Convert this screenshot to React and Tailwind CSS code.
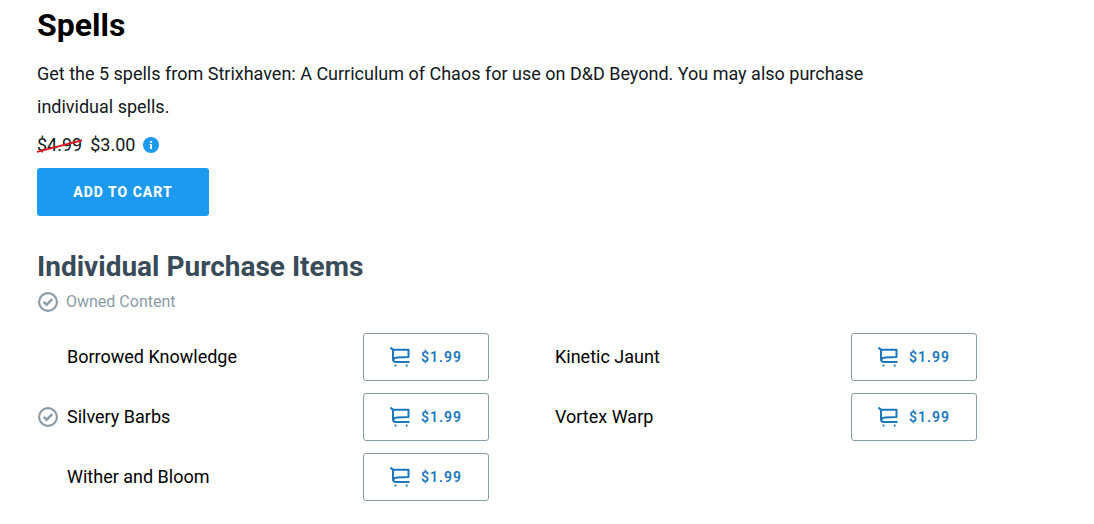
import { useState } from 'react'

const items = [
  { name: 'Borrowed Knowledge', price: '$1.99' },
  { name: 'Kinetic Jaunt', price: '$1.99' },
  { name: 'Silvery Barbs', price: '$1.99', owned: true },
  { name: 'Vortex Warp', price: '$1.99' },
  { name: 'Wither and Bloom', price: '$1.99' },
]

function OwnedIcon() {
  return (
    <svg viewBox="0 0 20 20" className="w-5 h-5 shrink-0" fill="none" stroke="#8a9ba8" aria-hidden="true">
      <circle cx="10" cy="10" r="8.9" strokeWidth="2.1" />
      <path d="M5.7 9.8 8.7 12.7 14.2 7.2" strokeWidth="2.4" />
    </svg>
  )
}

function CartIcon() {
  return (
    <svg viewBox="0 0 20 20" className="w-5 h-5 shrink-0" fill="none" stroke="#1b78bd" aria-hidden="true">
      <path d="M1 1.1 3 2.6V11.5 Q3 15 5.6 15 H18.8" strokeWidth="2" strokeLinecap="round" strokeLinejoin="round" />
      <path d="M3 2.8H18.5V10L7 10.6 Q4 10.8 3.2 12.6" strokeWidth="2" strokeLinejoin="round" />
      <circle cx="5.5" cy="18.6" r="1.1" fill="#1b78bd" stroke="none" />
      <circle cx="16.7" cy="18.6" r="1.1" fill="#1b78bd" stroke="none" />
    </svg>
  )
}

function InfoIcon() {
  return (
    <svg viewBox="0 0 16 16" className="w-4 h-4" aria-hidden="true">
      <circle cx="8" cy="8" r="8" fill="#1c9aef" />
      <path d="M7 4h2v1.7H7zM6.4 7H9v5H7V8h-.6z" fill="#fff" />
    </svg>
  )
}

function PurchaseItem({ item, onAdd }) {
  return (
    <li className="flex items-center h-12">
      <span className="w-[30px] shrink-0 flex pl-px">{item.owned && <OwnedIcon />}</span>
      <span className="flex-1 text-lg text-black">{item.name}</span>
      <button
        type="button"
        onClick={onAdd}
        aria-label={`Add ${item.name} to cart, ${item.price}`}
        className="w-[126px] h-12 flex items-center justify-center gap-[11px] rounded-[3px] border border-[#8a9ba8] bg-white text-sm font-semibold tracking-[1px] text-[#1b78bd] hover:bg-sky-50"
      >
        <CartIcon />
        {item.price}
      </button>
    </li>
  )
}

export default function App() {
  const [, setCart] = useState([])
  const add = name => setCart(prev => [...prev, name])

  return (
    <main className="bg-white pl-[37px] pr-[117px] pt-1 pb-6 font-[Roboto,sans-serif] text-[#12181c]">
      {/* Bundle */}
      <section>
        <h1 className="text-[32px] leading-[42px] font-bold text-black">Spells</h1>
        <p className="mt-[11px] max-w-[880px] text-lg leading-[33px]">
          Get the 5 spells from Strixhaven: A Curriculum of Chaos for use on D&amp;D Beyond. You may
          also purchase individual spells.
        </p>
        <div className="mt-2 flex items-center gap-2 text-lg leading-7">
          <s className="relative no-underline">
            $4.99
            <svg
              viewBox="0 0 46 14"
              className="absolute left-0 top-2 w-full h-[14px]"
              stroke="#e0141e"
              strokeWidth="2"
              aria-hidden="true"
            >
              <path d="M0 13 46 1" />
            </svg>
          </s>
          <span>$3.00</span>
          <button type="button" aria-label="Price information">
            <InfoIcon />
          </button>
        </div>
        <button
          type="button"
          onClick={() => add('Spells')}
          className="mt-[9px] w-[172px] h-12 rounded-[3px] bg-[#1c9aef] text-sm font-extrabold tracking-[1px] text-white uppercase hover:bg-[#1788d4]"
        >
          Add to Cart
        </button>
      </section>

      {/* Single spells */}
      <section className="mt-[33px]">
        <h2 className="text-[28px] leading-9 font-bold text-[#394b59]">Individual Purchase Items</h2>
        <div className="mt-[3px] pl-px flex items-center gap-2 text-base leading-7 text-[#8a9ba8]">
          <OwnedIcon />
          Owned Content
        </div>
        <ul className="mt-[17px] grid grid-cols-2 gap-x-9 gap-y-3">
          {items.map(item => (
            <PurchaseItem key={item.name} item={item} onAdd={() => add(item.name)} />
          ))}
        </ul>
      </section>
    </main>
  )
}
